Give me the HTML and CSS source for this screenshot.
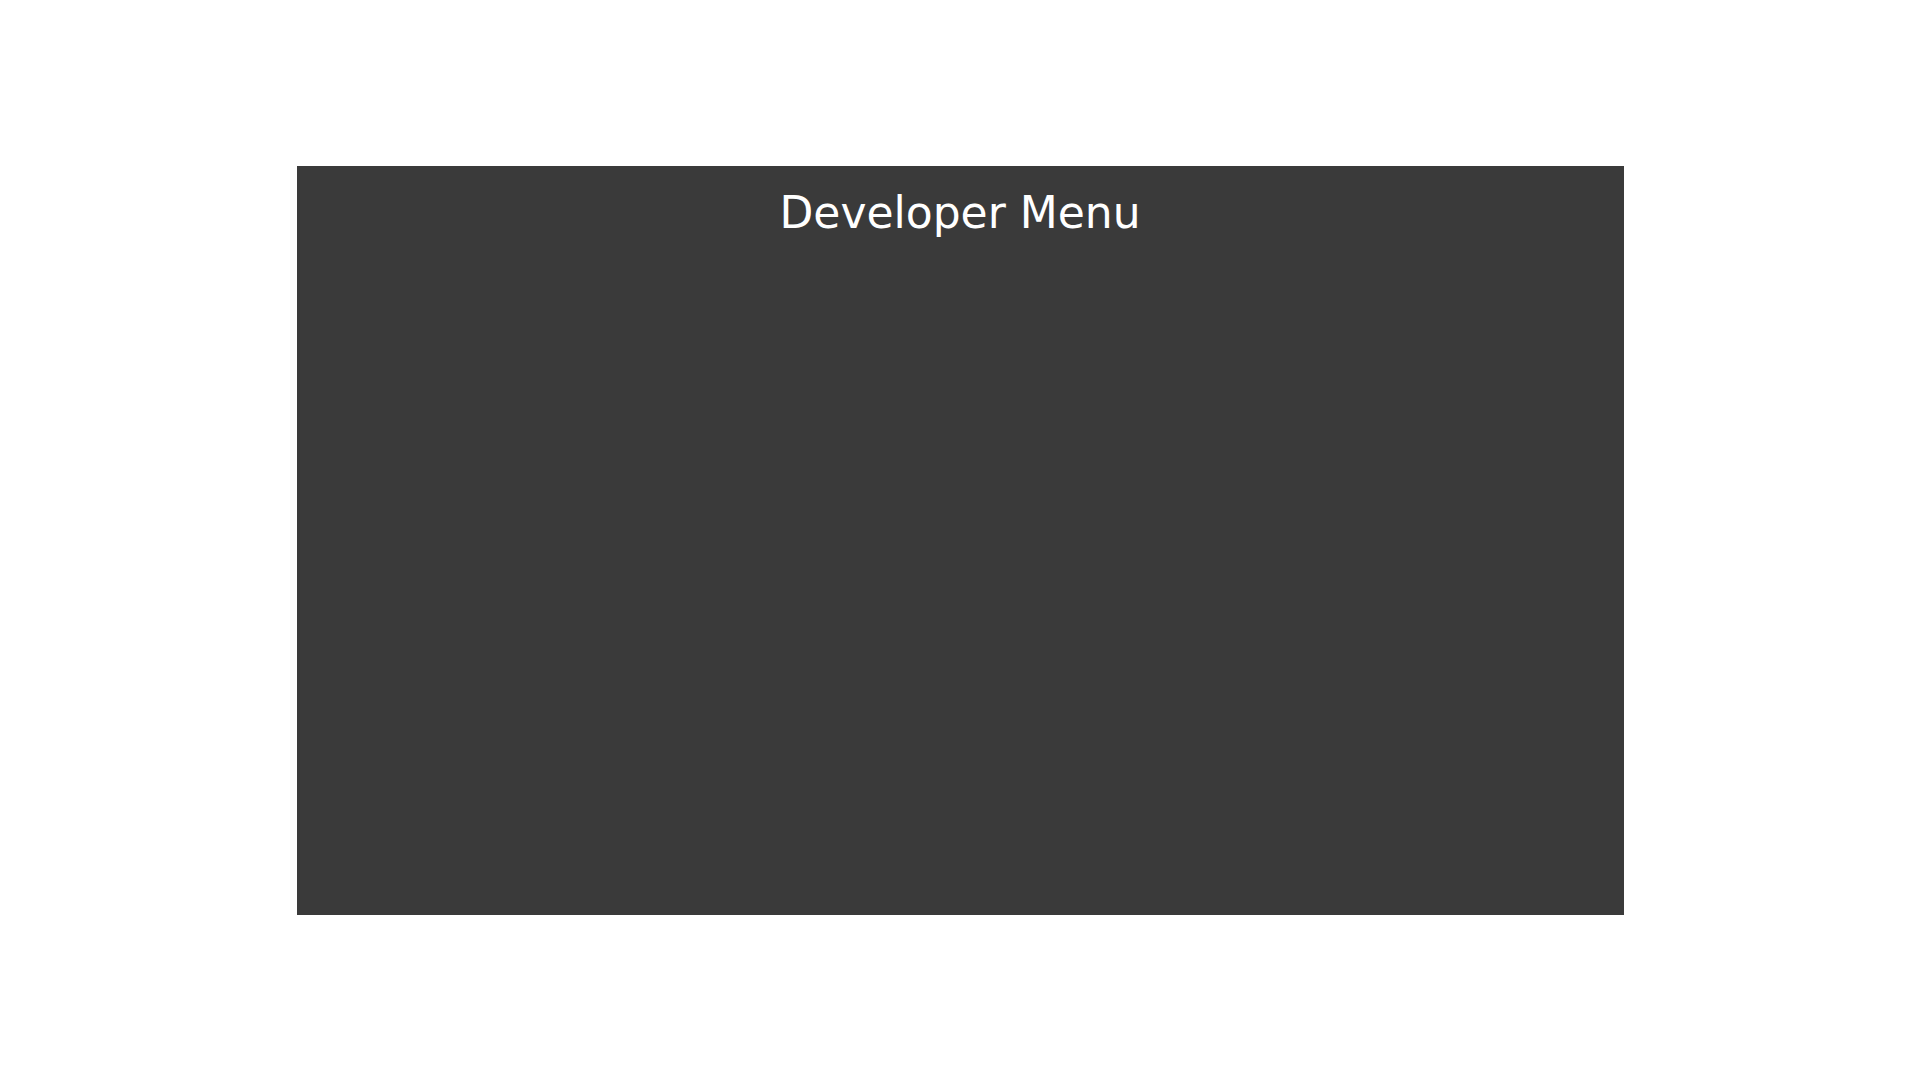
FILE: index.html
```html
<!DOCTYPE html>
<html>
<head>
<meta charset="utf-8">
<link rel="stylesheet" href="styles.css">
</head>
<body>
<div class="screen">
  <div class="panel">
    <h1 class="title">Developer Menu</h1>
  </div>
</div>
</body>
</html>
```
FILE: styles.css
```css
html, body {
  margin: 0;
  padding: 0;
  background: #ffffff;
}
.screen {
  width: 1920px;
  height: 1080px;
  display: flex;
  align-items: center;
  justify-content: center;
}
.panel {
  width: 1327px;
  height: 749px;
  background: #3a3a3a;
  display: flex;
  flex-direction: column;
  align-items: center;
}
.title {
  margin: 0;
  padding-top: 21px;
  font-family: "DejaVu Sans", sans-serif;
  font-weight: 400;
  font-size: 44px;
  line-height: 52px;
  color: #ffffff;
}
```
